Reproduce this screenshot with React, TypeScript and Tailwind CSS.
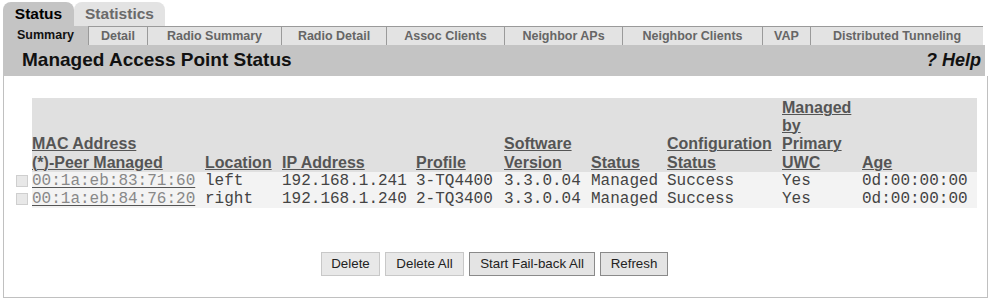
const subTabs = [
  { label: 'Summary', w: 'w-[85px]', active: true },
  { label: 'Detail', w: 'w-[59px]' },
  { label: 'Radio Summary', w: 'w-[134px]' },
  { label: 'Radio Detail', w: 'w-[105px]' },
  { label: 'Assoc Clients', w: 'w-[118px]' },
  { label: 'Neighbor APs', w: 'w-[118px]' },
  { label: 'Neighbor Clients', w: 'w-[140px]' },
  { label: 'VAP', w: 'w-[48px]' },
  { label: 'Distributed Tunneling', w: 'w-[173px]' },
];

const columns = [
  { lines: ['MAC Address', '(*)-Peer Managed'], w: 'w-[173px]' },
  { lines: ['Location'], w: 'w-[77px]' },
  { lines: ['IP Address'], w: 'w-[134px]' },
  { lines: ['Profile'], w: 'w-[88px]' },
  { lines: ['Software', 'Version'], w: 'w-[87px]' },
  { lines: ['Status'], w: 'w-[76px]' },
  { lines: ['Configuration', 'Status'], w: 'w-[115px]' },
  { lines: ['Managed', 'by', 'Primary', 'UWC'], w: 'w-[80px]' },
  { lines: ['Age'], w: 'w-[115px]' },
];

const rows = [
  ['00:1a:eb:83:71:60', 'left', '192.168.1.241', '3-TQ4400', '3.3.0.04', 'Managed', 'Success', 'Yes', '0d:00:00:00'],
  ['00:1a:eb:84:76:20', 'right', '192.168.1.240', '2-TQ3400', '3.3.0.04', 'Managed', 'Success', 'Yes', '0d:00:00:00'],
];

export default function App() {
  return (
    <div className="w-[990px] h-[301px] bg-white pl-[3px] pt-[2px] font-['Liberation_Sans',Arial,sans-serif] overflow-hidden">

      {/* ── Main tabs ─────────────────────────────────────────── */}
      <div className="flex h-[24px]">
        <div className="w-[71px] h-full rounded-t-[8px] bg-[#c4c4c4] flex items-center justify-center text-[15.5px] font-bold text-black">
          Status
        </div>
        <div className="w-[91px] h-full rounded-t-[8px] bg-[#e3e3e3] flex items-center justify-center text-[15.5px] font-bold text-[#6a6a6a]">
          Statistics
        </div>
      </div>

      {/* ── Sub tabs ──────────────────────────────────────────── */}
      <div className="flex h-[19px] w-[980px]">
        {subTabs.map((t) =>
          t.active ? (
            <div key={t.label} className={`${t.w} h-full bg-[#c4c4c4] flex items-center justify-center text-[12.5px] font-bold text-[#111]`}>
              {t.label}
            </div>
          ) : (
            <div key={t.label} className={`${t.w} h-full bg-[#e3e3e3] border-t border-l border-[#9a9a9a] flex items-center justify-center text-[12.5px] font-bold text-[#666]`}>
              {t.label}
            </div>
          )
        )}
      </div>

      {/* ── Title bar ─────────────────────────────────────────── */}
      <div className="w-[982px] h-[31px] bg-[#c4c4c4] flex items-center justify-between pl-[19px] pr-[4px]">
        <p className="text-[19px] font-bold text-[#111]">Managed Access Point Status</p>
        <p className="text-[18px] font-bold italic text-[#111]">? Help</p>
      </div>

      {/* ── Content ───────────────────────────────────────────── */}
      <div className="w-[985px] h-[222px] border-l border-r border-b border-[#c0c0c0] pl-[10px] pt-[22px]">
        <table className="border-collapse table-fixed w-[963px]">
          <colgroup>
            <col className="w-[18px]" />
            {columns.map((c, i) => (
              <col key={i} className={c.w} />
            ))}
          </colgroup>
          <thead>
            <tr>
              <th className="p-0" />
              {columns.map((c, i) => (
                <th key={i} className="p-0 h-[74px] align-bottom text-left bg-[#e0e0e0] text-[16px] leading-[18.3px] font-bold text-[#555]">
                  {c.lines.map((l, j) => (
                    <div key={j}>
                      <span className="underline decoration-1 underline-offset-[1px]">{l}</span>
                    </div>
                  ))}
                </th>
              ))}
            </tr>
          </thead>
          <tbody>
            {rows.map((r, i) => (
              <tr key={i} className="bg-[#f3f3f3]">
                <td className="p-0 pl-[2px] align-middle bg-white">
                  <div className="w-[12px] h-[12px] bg-[#e8e8e8] border border-[#cfcfcf]" />
                </td>
                {r.map((v, j) => (
                  <td
                    key={j}
                    className={`p-0 h-[18px] leading-[18px] whitespace-nowrap text-[16px] font-['Liberation_Mono','Courier_New',monospace] ${
                      j === 0 ? 'text-[#888]' : 'text-[#444]'
                    }`}
                  >
                    {j === 0 ? <span className="underline decoration-[#555] underline-offset-2">{v}</span> : v}
                  </td>
                ))}
              </tr>
            ))}
          </tbody>
        </table>

        {/* Buttons */}
        <div className="flex justify-center gap-[5px] mt-[44px] pr-[12px]">
          <button className="w-[59px] h-[24px] bg-[#e8e8e8] border border-[#c8c8c8] text-[13.33px] text-[#222]">Delete</button>
          <button className="w-[79px] h-[24px] bg-[#e8e8e8] border border-[#c8c8c8] text-[13.33px] text-[#222]">Delete All</button>
          <button className="w-[126px] h-[24px] bg-[#e4e4e4] border border-[#8a8a8a] text-[13.33px] text-[#222]">Start Fail-back All</button>
          <button className="w-[68px] h-[24px] bg-[#e4e4e4] border border-[#8a8a8a] text-[13.33px] text-[#222]">Refresh</button>
        </div>
      </div>
    </div>
  );
}
